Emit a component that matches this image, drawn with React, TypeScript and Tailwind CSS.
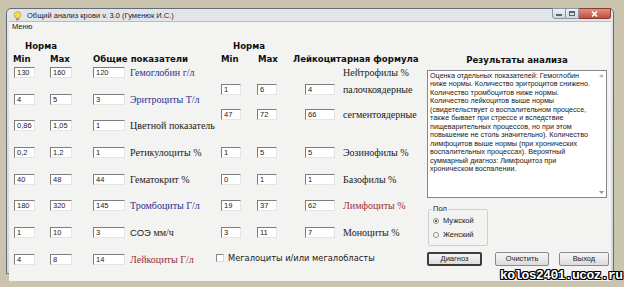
import React from "react";

const head = "font-['DejaVu_Sans',sans-serif] font-bold text-[8.6px] leading-[13px] text-[#111] whitespace-nowrap";
const serif = "font-['Liberation_Serif',serif] text-[10px] leading-[11px] whitespace-nowrap";
const small = "font-['Liberation_Sans',sans-serif] text-[7.5px] text-[#1a1a1a] whitespace-nowrap";

const tone: Record<string, string> = {
  navy: "text-[#2d3190]",
  red: "text-[#9c2d2d]",
  black: "text-[#1a1a1a]",
};

const Field = ({ v, w }: { v: string; w: string }) => (
  <div
    className={`${w} h-[11px] bg-white border-t border-l border-t-[#7d7d7d] border-l-[#7d7d7d] border-r border-b border-r-[#e4e4e4] border-b-[#e4e4e4] pl-[2px] font-['Liberation_Sans',sans-serif] text-[7.5px] leading-[10px] text-[#222]`}
  >
    {v}
  </div>
);

const general = [
  ["130", "160", "120", "Гемоглобин г/л", "navy"],
  ["4", "5", "3", "Эритроциты Т/л", "navy"],
  ["0,86", "1,05", "1", "Цветной показатель", "black"],
  ["0,2", "1,2", "1", "Ретикулоциты %", "black"],
  ["40", "48", "44", "Гематокрит %", "black"],
  ["180", "320", "145", "Тромбоциты Г/л", "navy"],
  ["1", "10", "3", "СОЭ мм/ч", "black"],
  ["4", "8", "14", "Лейкоциты Г/л", "red"],
];

const formula = [
  ["1", "6", "4", "палочкоядерные", "black", "h-[25px]"],
  ["47", "72", "66", "сегментоядерные", "black", "h-[38px]"],
  ["1", "5", "5", "Эозинофилы %", "black", "h-[27px]"],
  ["0", "1", "1", "Базофилы %", "black", "h-[26px]"],
  ["19", "37", "62", "Лимфоциты %", "red", "h-[27px]"],
  ["3", "11", "7", "Моноциты %", "black", "h-[24px]"],
];

const result = [
  "Оценка отдельных показателей: Гемоглобин",
  "ниже нормы. Количество эритроцитов снижено.",
  "Количество тромбоцитов ниже нормы.",
  "Количество лейкоцитов выше нормы",
  "(свидетельствует о воспалительном процессе,",
  "также бывает при стрессе и вследствие",
  "пищеварительных процессов, но при этом",
  "повышение не столь значительно). Количество",
  "лимфоцитов выше нормы (при хронических",
  "воспалительных процессах). Вероятный",
  "суммарный диагноз: Лимфоцитоз при",
  "хроническом воспалении.",
];

const Label = ({ text, c }: { text: string; c: string }) =>
  text.startsWith("СОЭ") ? (
    <span className={`${serif} ${tone[c]}`}>
      <span className="font-['Liberation_Sans',sans-serif] text-[9.5px]">СОЭ</span> мм/ч
    </span>
  ) : (
    <span className={`${serif} ${tone[c]}`}>{text}</span>
  );

const Button = ({ text, w, focus }: { text: string; w: string; focus?: boolean }) => (
  <div
    className={`${w} h-[14px] rounded-[2px] flex items-center justify-center bg-gradient-to-b from-[#f6f6f6] to-[#dcdcdc] ${
      focus ? "border-2 border-[#3c3c3c]" : "border border-[#8a8a8a]"
    } ${small}`}
  >
    {text}
  </div>
);

export default function App() {
  return (
    <div className="relative w-[624px] h-[287px] overflow-hidden bg-[#cac3ae] pt-[8px] pl-[6px]">
      <div className="w-[608px] h-[266px] flex flex-col rounded-t-[5px] border border-[#646b74] bg-gradient-to-b from-[#e2e6eb] to-[#d3d8de] px-[2px] pb-[3px]">
        {/* title bar */}
        <div className="h-[13px] flex items-start">
          <svg width="9" height="10" viewBox="0 0 9 10" className="ml-[4px] mt-[2px]">
            <circle cx="4.5" cy="4" r="3.4" fill="#f3dc4a" stroke="#b59a1a" strokeWidth="0.6" />
            <rect x="3" y="7" width="3" height="2.4" fill="#9a9a9a" />
          </svg>
          <span className={`${small} ml-[5px] mt-[2px] leading-[9px] text-[#222]`}>
            Общий анализ крови v. 3.0 (Гуменюк И.С.)
          </span>
          <div className="ml-auto flex items-start -mt-[1px]">
            <div className="w-[14px] h-[11px] rounded-bl-[3px] border border-[#8d96a2] bg-gradient-to-b from-[#eef1f5] to-[#cfd6de] flex items-end justify-center pb-[2px]">
              <div className="w-[6px] h-[2px] bg-[#5a6470]" />
            </div>
            <div className="w-[13px] h-[11px] border border-l-0 border-[#8d96a2] bg-gradient-to-b from-[#eef1f5] to-[#cfd6de] flex items-center justify-center">
              <div className="w-[6px] h-[5px] border border-t-2 border-[#5a6470]" />
            </div>
            <div className="w-[32px] h-[11px] rounded-br-[3px] border border-l-0 border-[#8a3b30] bg-gradient-to-b from-[#e2907f] to-[#c24e3c] flex items-center justify-center">
              <svg width="7" height="6" viewBox="0 0 7 6">
                <path d="M1 0.5 L6 5.5 M6 0.5 L1 5.5" stroke="#fff" strokeWidth="1.6" />
              </svg>
            </div>
          </div>
        </div>

        {/* client area */}
        <div className="flex-1 flex flex-col bg-[#f3f3f2] border-t border-[#b9bdc2]">
          <div className={`${small} h-[10px] pl-[3px] leading-[10px]`}>Меню</div>

          <div className="flex">
            {/* general indicators */}
            <div className="w-[206px] flex flex-col">
              <div className={`${head} mt-[8px] h-[13px] pl-[16px]`}>Норма</div>
              <div className="flex h-[14px]">
                <div className={`${head} w-[41px] pl-[4px]`}>Min</div>
                <div className={`${head} w-[43px]`}>Max</div>
                <div className={head}>Общие показатели</div>
              </div>
              {general.map(([a, b, c, text, col]) => (
                <div key={text} className="flex items-start h-[26.7px]">
                  <div className="w-[41px] pl-[5px]">
                    <Field v={a} w="w-[21px]" />
                  </div>
                  <div className="w-[43px]">
                    <Field v={b} w="w-[22px]" />
                  </div>
                  <div className="w-[37px]">
                    <Field v={c} w="w-[32px]" />
                  </div>
                  <Label text={text} c={col} />
                </div>
              ))}
            </div>

            {/* leukocyte formula */}
            <div className="w-[212px] flex flex-col">
              <div className={`${head} mt-[8px] h-[13px] pl-[18px]`}>Норма</div>
              <div className="flex h-[14px]">
                <div className={`${head} w-[42px] pl-[6px]`}>Min</div>
                <div className={`${head} w-[36px] pl-[1px]`}>Max</div>
                <div className={head}>Лейкоцитарная формула</div>
              </div>
              <div className="flex items-start h-[17px] pl-[128px]">
                <span className={`${serif} ${tone.black}`}>Нейтрофилы %</span>
              </div>
              {formula.map(([a, b, c, text, col, h]) => (
                <div key={text} className={`flex items-start ${h}`}>
                  <div className="w-[42px] pl-[6px]">
                    <Field v={a} w="w-[20px]" />
                  </div>
                  <div className="w-[36px]">
                    <Field v={b} w="w-[20px]" />
                  </div>
                  <div className="w-[50px] pl-[12px]">
                    <Field v={c} w="w-[30px]" />
                  </div>
                  <Label text={text} c={col} />
                </div>
              ))}
              <div className="flex items-center h-[14px] pl-[1px]">
                <div className="w-[8px] h-[8px] bg-white border-t border-l border-t-[#8a8a8a] border-l-[#8a8a8a] border-r border-b border-r-[#dcdcdc] border-b-[#dcdcdc]" />
                <span className="ml-[4px] font-['DejaVu_Sans',sans-serif] text-[8.3px] leading-[11px] text-[#1a1a1a] whitespace-nowrap">
                  Мегалоциты и/или мегалобласты
                </span>
              </div>
            </div>

            {/* results */}
            <div className="w-[184px] flex flex-col">
              <div className={`${head} mt-[22px] h-[13px] w-[180px] text-center`}>Результаты анализа</div>
              <div className="mt-[3px] w-[180px] h-[128px] flex bg-white border border-[#828790]">
                <div className="flex-1 pl-[2px] pt-[1px]">
                  {result.map((l) => (
                    <div key={l} className="font-['Liberation_Sans',sans-serif] text-[7.2px] leading-[8.45px] text-[#202020] whitespace-nowrap">
                      {l}
                    </div>
                  ))}
                </div>
                <div className="w-[10px] flex flex-col items-center justify-between py-[3px]">
                  <svg width="5" height="3" viewBox="0 0 5 3">
                    <path d="M0 3 L2.5 0 L5 3 Z" fill="#b4b4b4" />
                  </svg>
                  <svg width="5" height="3" viewBox="0 0 5 3">
                    <path d="M0 0 L2.5 3 L5 0 Z" fill="#9a9a9a" />
                  </svg>
                </div>
              </div>

              {/* sex */}
              <div className="mt-[11px] ml-[1px] w-[60px] h-[37px] border border-[#cfcfcf] rounded-[2px] relative flex flex-col pl-[4px] pt-[6px] gap-[5px]">
                <span className={`${small} absolute -top-[6px] left-[3px] px-[1px] bg-[#f3f3f2] leading-[10px]`}>Пол</span>
                <div className="flex items-center">
                  <div className="w-[6px] h-[6px] rounded-full border border-[#8a8a8a] bg-white flex items-center justify-center">
                    <div className="w-[2px] h-[2px] rounded-full bg-[#222]" />
                  </div>
                  <span className={`${small} ml-[4px] leading-[9px]`}>Мужской</span>
                </div>
                <div className="flex items-center">
                  <div className="w-[6px] h-[6px] rounded-full border border-[#8a8a8a] bg-white" />
                  <span className={`${small} ml-[4px] leading-[9px]`}>Женский</span>
                </div>
              </div>

              <div className="flex mt-[6px]">
                <Button text="Диагноз" w="w-[55px]" focus />
                <div className="ml-[13px]">
                  <Button text="Очистить" w="w-[54px]" />
                </div>
                <div className="ml-[10px]">
                  <Button text="Выход" w="w-[50px]" />
                </div>
              </div>
            </div>
          </div>
        </div>
      </div>

      <div className="absolute left-[500px] top-[268px] font-['Liberation_Mono',monospace] font-bold text-[13px] tracking-[-0.6px] leading-[16px] text-white [text-shadow:1px_0_0_#000,-1px_0_0_#000,0_1px_0_#000,0_-1px_0_#000,1px_1px_0_#000,-1px_-1px_0_#000,1px_-1px_0_#000,-1px_1px_0_#000]">
        kolos2401.ucoz.ru
      </div>
    </div>
  );
}
